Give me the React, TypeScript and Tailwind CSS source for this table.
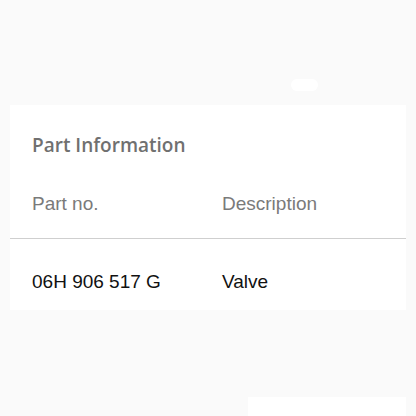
export default function App() {
  return (
    <div className="w-[416px] h-[416px] bg-[#fafafa] overflow-hidden flex flex-col" style={{ fontFamily: '"Liberation Sans", Arial, sans-serif' }}>
      <div className="shrink-0 mt-[79px] ml-[291px] w-[27px] h-[12px] bg-white rounded-full" />
      <div className="shrink-0 mt-[14px] mx-[10px] h-[205px] bg-white flex flex-col">
        <div className="shrink-0 h-[24px] mt-[28px] px-[22px] text-[19px] leading-[24px] font-semibold text-[#707070]" style={{ fontFamily: '"Open Sans", sans-serif' }}>
          Part Information
        </div>
        <div className="shrink-0 mt-[35px] h-[24px] px-[22px] flex text-[19px] leading-[24px] text-[#7a7a7a]">
          <div className="w-[190px]">Part no.</div>
          <div>Description</div>
        </div>
        <div className="shrink-0 mt-[22px] h-[1px] bg-[#cfcfcf]" />
        <div className="shrink-0 mt-[31px] h-[24px] px-[22px] flex text-[19px] leading-[24px] text-[#111]">
          <div className="w-[190px]">06H 906 517 G</div>
          <div>Valve</div>
        </div>
      </div>
      <div className="shrink-0 mt-[87px] ml-[248px] w-[158px] h-[30px] bg-white" />
    </div>
  );
}
